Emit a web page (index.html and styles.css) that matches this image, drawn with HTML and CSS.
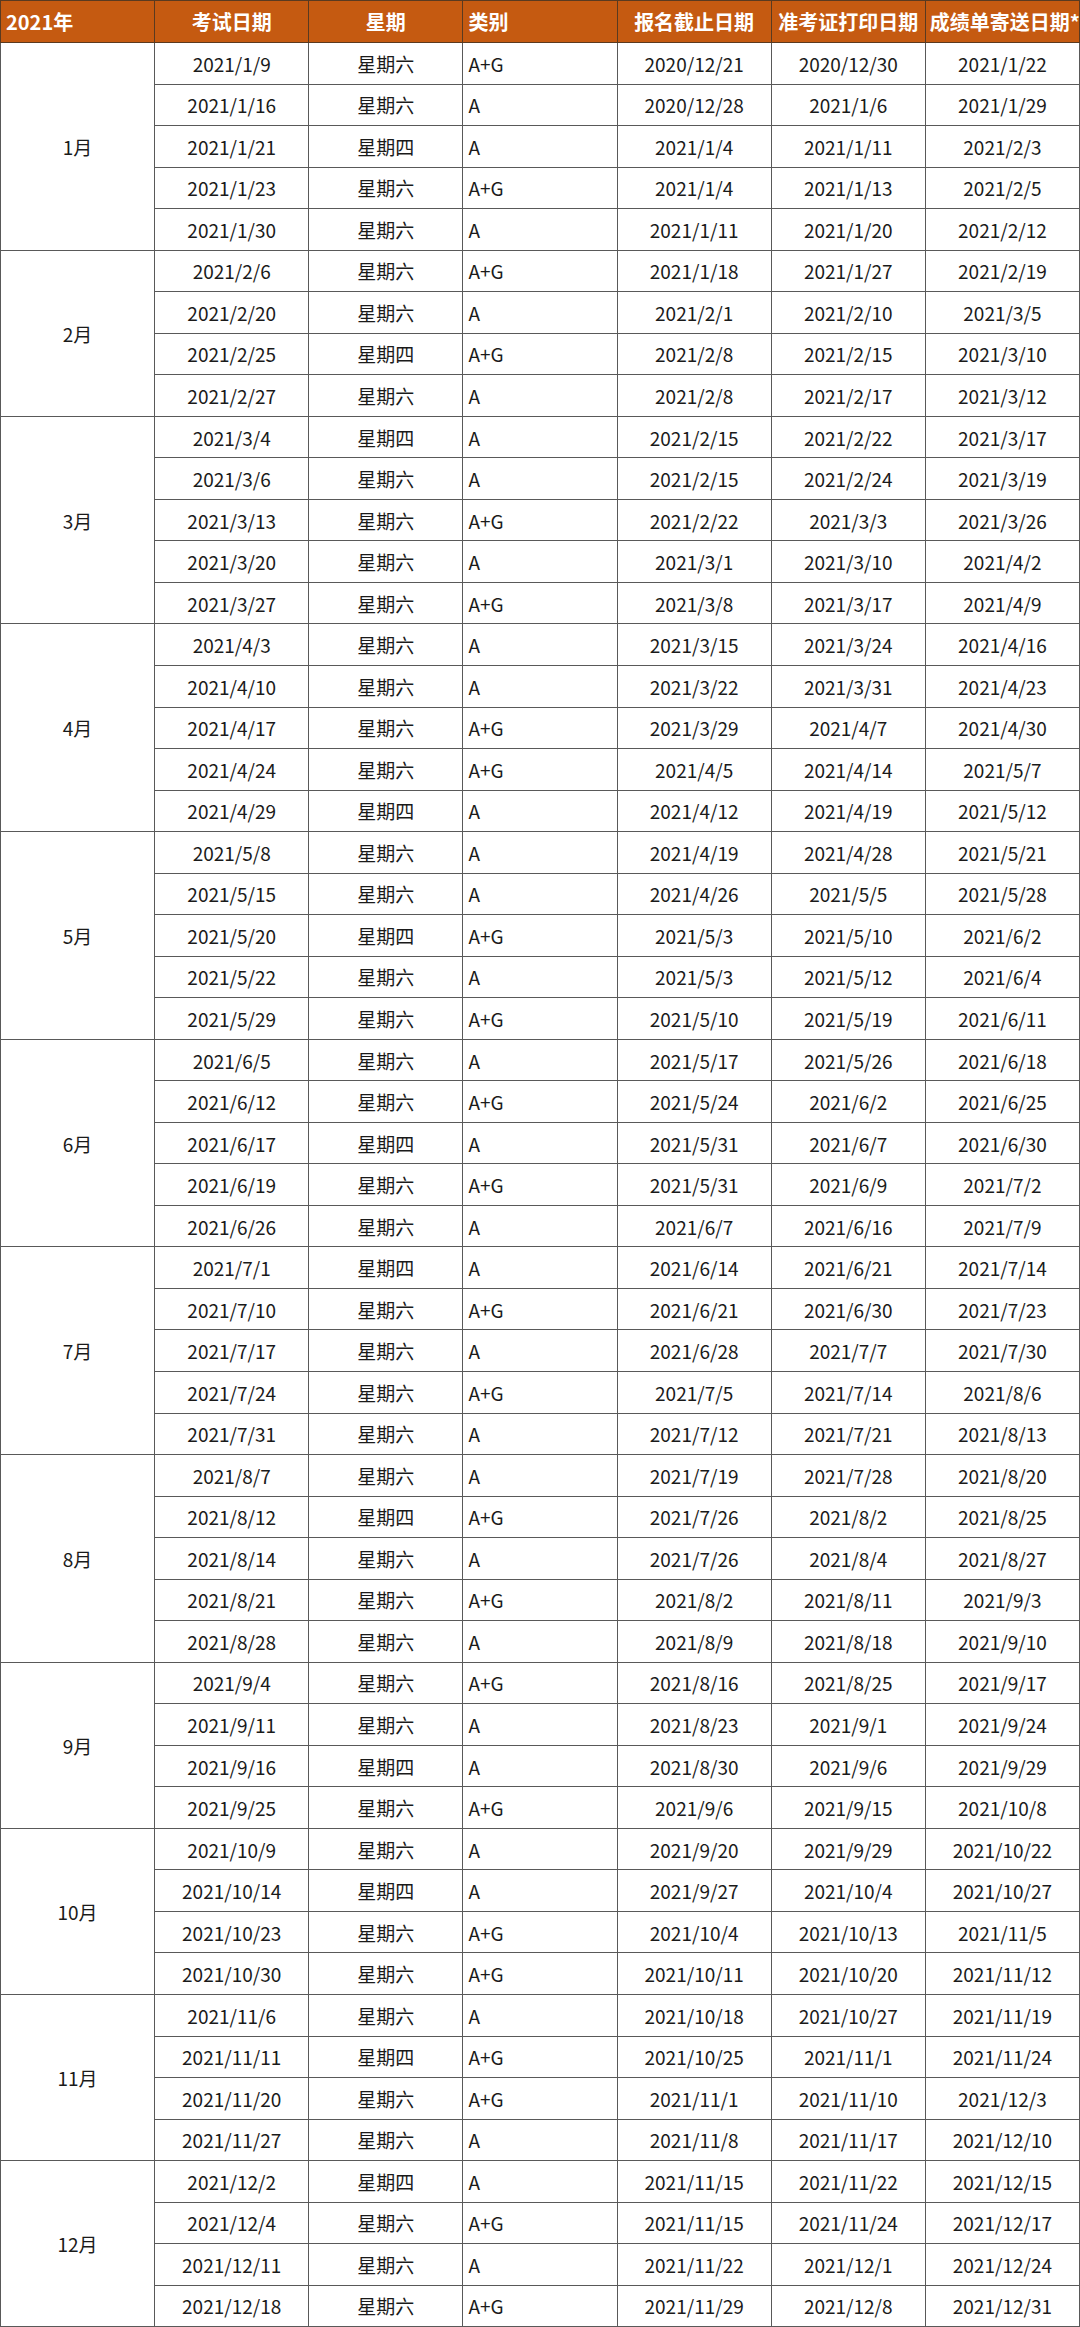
FILE: index.html
```html
<!DOCTYPE html>
<html lang="zh-CN">
<head>
<meta charset="utf-8">
<title>2021年考试日期</title>
<link rel="stylesheet" href="styles.css">
</head>
<body>
<table class="sched">
<colgroup><col><col><col><col><col><col><col></colgroup>
<thead>
<tr class="head"><th class="l">2021年</th><th>考试日期</th><th>星期</th><th class="l">类别</th><th>报名截止日期</th><th>准考证打印日期</th><th>成绩单寄送日期*</th></tr>
</thead>
<tbody>
<tr><td class="m" rowspan="5">1月</td><td>2021/1/9</td><td>星期六</td><td class="l">A+G</td><td>2020/12/21</td><td>2020/12/30</td><td>2021/1/22</td></tr>
<tr><td>2021/1/16</td><td>星期六</td><td class="l">A</td><td>2020/12/28</td><td>2021/1/6</td><td>2021/1/29</td></tr>
<tr><td>2021/1/21</td><td>星期四</td><td class="l">A</td><td>2021/1/4</td><td>2021/1/11</td><td>2021/2/3</td></tr>
<tr><td>2021/1/23</td><td>星期六</td><td class="l">A+G</td><td>2021/1/4</td><td>2021/1/13</td><td>2021/2/5</td></tr>
<tr><td>2021/1/30</td><td>星期六</td><td class="l">A</td><td>2021/1/11</td><td>2021/1/20</td><td>2021/2/12</td></tr>

<tr><td class="m" rowspan="4">2月</td><td>2021/2/6</td><td>星期六</td><td class="l">A+G</td><td>2021/1/18</td><td>2021/1/27</td><td>2021/2/19</td></tr>
<tr><td>2021/2/20</td><td>星期六</td><td class="l">A</td><td>2021/2/1</td><td>2021/2/10</td><td>2021/3/5</td></tr>
<tr><td>2021/2/25</td><td>星期四</td><td class="l">A+G</td><td>2021/2/8</td><td>2021/2/15</td><td>2021/3/10</td></tr>
<tr><td>2021/2/27</td><td>星期六</td><td class="l">A</td><td>2021/2/8</td><td>2021/2/17</td><td>2021/3/12</td></tr>

<tr><td class="m" rowspan="5">3月</td><td>2021/3/4</td><td>星期四</td><td class="l">A</td><td>2021/2/15</td><td>2021/2/22</td><td>2021/3/17</td></tr>
<tr><td>2021/3/6</td><td>星期六</td><td class="l">A</td><td>2021/2/15</td><td>2021/2/24</td><td>2021/3/19</td></tr>
<tr><td>2021/3/13</td><td>星期六</td><td class="l">A+G</td><td>2021/2/22</td><td>2021/3/3</td><td>2021/3/26</td></tr>
<tr><td>2021/3/20</td><td>星期六</td><td class="l">A</td><td>2021/3/1</td><td>2021/3/10</td><td>2021/4/2</td></tr>
<tr><td>2021/3/27</td><td>星期六</td><td class="l">A+G</td><td>2021/3/8</td><td>2021/3/17</td><td>2021/4/9</td></tr>

<tr><td class="m" rowspan="5">4月</td><td>2021/4/3</td><td>星期六</td><td class="l">A</td><td>2021/3/15</td><td>2021/3/24</td><td>2021/4/16</td></tr>
<tr><td>2021/4/10</td><td>星期六</td><td class="l">A</td><td>2021/3/22</td><td>2021/3/31</td><td>2021/4/23</td></tr>
<tr><td>2021/4/17</td><td>星期六</td><td class="l">A+G</td><td>2021/3/29</td><td>2021/4/7</td><td>2021/4/30</td></tr>
<tr><td>2021/4/24</td><td>星期六</td><td class="l">A+G</td><td>2021/4/5</td><td>2021/4/14</td><td>2021/5/7</td></tr>
<tr><td>2021/4/29</td><td>星期四</td><td class="l">A</td><td>2021/4/12</td><td>2021/4/19</td><td>2021/5/12</td></tr>

<tr><td class="m" rowspan="5">5月</td><td>2021/5/8</td><td>星期六</td><td class="l">A</td><td>2021/4/19</td><td>2021/4/28</td><td>2021/5/21</td></tr>
<tr><td>2021/5/15</td><td>星期六</td><td class="l">A</td><td>2021/4/26</td><td>2021/5/5</td><td>2021/5/28</td></tr>
<tr><td>2021/5/20</td><td>星期四</td><td class="l">A+G</td><td>2021/5/3</td><td>2021/5/10</td><td>2021/6/2</td></tr>
<tr><td>2021/5/22</td><td>星期六</td><td class="l">A</td><td>2021/5/3</td><td>2021/5/12</td><td>2021/6/4</td></tr>
<tr><td>2021/5/29</td><td>星期六</td><td class="l">A+G</td><td>2021/5/10</td><td>2021/5/19</td><td>2021/6/11</td></tr>

<tr><td class="m" rowspan="5">6月</td><td>2021/6/5</td><td>星期六</td><td class="l">A</td><td>2021/5/17</td><td>2021/5/26</td><td>2021/6/18</td></tr>
<tr><td>2021/6/12</td><td>星期六</td><td class="l">A+G</td><td>2021/5/24</td><td>2021/6/2</td><td>2021/6/25</td></tr>
<tr><td>2021/6/17</td><td>星期四</td><td class="l">A</td><td>2021/5/31</td><td>2021/6/7</td><td>2021/6/30</td></tr>
<tr><td>2021/6/19</td><td>星期六</td><td class="l">A+G</td><td>2021/5/31</td><td>2021/6/9</td><td>2021/7/2</td></tr>
<tr><td>2021/6/26</td><td>星期六</td><td class="l">A</td><td>2021/6/7</td><td>2021/6/16</td><td>2021/7/9</td></tr>

<tr><td class="m" rowspan="5">7月</td><td>2021/7/1</td><td>星期四</td><td class="l">A</td><td>2021/6/14</td><td>2021/6/21</td><td>2021/7/14</td></tr>
<tr><td>2021/7/10</td><td>星期六</td><td class="l">A+G</td><td>2021/6/21</td><td>2021/6/30</td><td>2021/7/23</td></tr>
<tr><td>2021/7/17</td><td>星期六</td><td class="l">A</td><td>2021/6/28</td><td>2021/7/7</td><td>2021/7/30</td></tr>
<tr><td>2021/7/24</td><td>星期六</td><td class="l">A+G</td><td>2021/7/5</td><td>2021/7/14</td><td>2021/8/6</td></tr>
<tr><td>2021/7/31</td><td>星期六</td><td class="l">A</td><td>2021/7/12</td><td>2021/7/21</td><td>2021/8/13</td></tr>

<tr><td class="m" rowspan="5">8月</td><td>2021/8/7</td><td>星期六</td><td class="l">A</td><td>2021/7/19</td><td>2021/7/28</td><td>2021/8/20</td></tr>
<tr><td>2021/8/12</td><td>星期四</td><td class="l">A+G</td><td>2021/7/26</td><td>2021/8/2</td><td>2021/8/25</td></tr>
<tr><td>2021/8/14</td><td>星期六</td><td class="l">A</td><td>2021/7/26</td><td>2021/8/4</td><td>2021/8/27</td></tr>
<tr><td>2021/8/21</td><td>星期六</td><td class="l">A+G</td><td>2021/8/2</td><td>2021/8/11</td><td>2021/9/3</td></tr>
<tr><td>2021/8/28</td><td>星期六</td><td class="l">A</td><td>2021/8/9</td><td>2021/8/18</td><td>2021/9/10</td></tr>

<tr><td class="m" rowspan="4">9月</td><td>2021/9/4</td><td>星期六</td><td class="l">A+G</td><td>2021/8/16</td><td>2021/8/25</td><td>2021/9/17</td></tr>
<tr><td>2021/9/11</td><td>星期六</td><td class="l">A</td><td>2021/8/23</td><td>2021/9/1</td><td>2021/9/24</td></tr>
<tr><td>2021/9/16</td><td>星期四</td><td class="l">A</td><td>2021/8/30</td><td>2021/9/6</td><td>2021/9/29</td></tr>
<tr><td>2021/9/25</td><td>星期六</td><td class="l">A+G</td><td>2021/9/6</td><td>2021/9/15</td><td>2021/10/8</td></tr>

<tr><td class="m" rowspan="4">10月</td><td>2021/10/9</td><td>星期六</td><td class="l">A</td><td>2021/9/20</td><td>2021/9/29</td><td>2021/10/22</td></tr>
<tr><td>2021/10/14</td><td>星期四</td><td class="l">A</td><td>2021/9/27</td><td>2021/10/4</td><td>2021/10/27</td></tr>
<tr><td>2021/10/23</td><td>星期六</td><td class="l">A+G</td><td>2021/10/4</td><td>2021/10/13</td><td>2021/11/5</td></tr>
<tr><td>2021/10/30</td><td>星期六</td><td class="l">A+G</td><td>2021/10/11</td><td>2021/10/20</td><td>2021/11/12</td></tr>

<tr><td class="m" rowspan="4">11月</td><td>2021/11/6</td><td>星期六</td><td class="l">A</td><td>2021/10/18</td><td>2021/10/27</td><td>2021/11/19</td></tr>
<tr><td>2021/11/11</td><td>星期四</td><td class="l">A+G</td><td>2021/10/25</td><td>2021/11/1</td><td>2021/11/24</td></tr>
<tr><td>2021/11/20</td><td>星期六</td><td class="l">A+G</td><td>2021/11/1</td><td>2021/11/10</td><td>2021/12/3</td></tr>
<tr><td>2021/11/27</td><td>星期六</td><td class="l">A</td><td>2021/11/8</td><td>2021/11/17</td><td>2021/12/10</td></tr>

<tr><td class="m" rowspan="4">12月</td><td>2021/12/2</td><td>星期四</td><td class="l">A</td><td>2021/11/15</td><td>2021/11/22</td><td>2021/12/15</td></tr>
<tr><td>2021/12/4</td><td>星期六</td><td class="l">A+G</td><td>2021/11/15</td><td>2021/11/24</td><td>2021/12/17</td></tr>
<tr><td>2021/12/11</td><td>星期六</td><td class="l">A</td><td>2021/11/22</td><td>2021/12/1</td><td>2021/12/24</td></tr>
<tr><td>2021/12/18</td><td>星期六</td><td class="l">A+G</td><td>2021/11/29</td><td>2021/12/8</td><td>2021/12/31</td></tr>
</tbody>
</table>
</body>
</html>
```

FILE: styles.css
```css
html, body {
  margin: 0;
  padding: 0;
  background: #ffffff;
}

.sched {
  width: 1080px;
  table-layout: fixed;
  border-collapse: collapse;
  font-family: "Noto Sans CJK SC", "Noto Sans", sans-serif;
  font-size: 19px;
  color: #1a1a1a;
}

.sched th,
.sched td {
  border: 1px solid #595959;
  padding: 0 4px;
  text-align: center;
  vertical-align: middle;
  white-space: nowrap;
  overflow: hidden;
  line-height: 1;
}

.sched .head {
  height: 42px;
}

.sched th {
  background: #c55a11;
  color: #ffffff;
  font-weight: 700;
  font-size: 20px;
  border-color: #5a3a20;
}

.sched tbody tr {
  height: 41.545px;
}

.sched .l {
  text-align: left;
  padding-left: 5px;
}

.sched td.l {
  border-left: 1px solid #9a9a9a;
}

.sched .m {
  font-size: 19px;
}
```
